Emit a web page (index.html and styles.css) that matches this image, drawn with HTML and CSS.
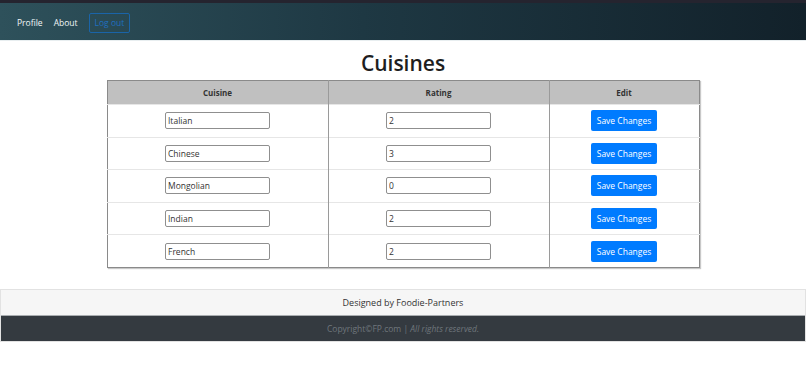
FILE: index.html
```html
<!DOCTYPE html>
<html lang="en">
    <head>
        <meta name="viewport" content="width=device-width, initial-scale=1">
        <link rel="stylesheet" href="styles.css">
        <title>Cuisines</title>
    </head>
    <body>
        <div class="topline"></div>
        <nav class="navbar">
            <a href="#">Profile</a>
            <a href="#">About</a>
            <button class="logout">Log out</button>
        </nav>
        <h1 class="title">Cuisines</h1>
        <table class="cuisines">
            <thead>
                <tr>
                    <th class="col-name">Cuisine</th>
                    <th class="col-rating">Rating</th>
                    <th>Edit</th>
                </tr>
            </thead>
            <tbody>
                <tr>
                    <td><input type="text" value="Italian"></td>
                    <td><input type="text" value="2"></td>
                    <td><button class="save">Save Changes</button></td>
                </tr>
                <tr>
                    <td><input type="text" value="Chinese"></td>
                    <td><input type="text" value="3"></td>
                    <td><button class="save">Save Changes</button></td>
                </tr>
                <tr>
                    <td><input type="text" value="Mongolian"></td>
                    <td><input type="text" value="0"></td>
                    <td><button class="save">Save Changes</button></td>
                </tr>
                <tr>
                    <td><input type="text" value="Indian"></td>
                    <td><input type="text" value="2"></td>
                    <td><button class="save">Save Changes</button></td>
                </tr>
                <tr>
                    <td><input type="text" value="French"></td>
                    <td><input type="text" value="2"></td>
                    <td><button class="save">Save Changes</button></td>
                </tr>
            </tbody>
        </table>
        <footer>
            <div class="designed">Designed by Foodie-Partners</div>
            <div class="copyright">Copyright&copy;FP.com | <em>All rights reserved.</em></div>
        </footer>
    </body>
</html>
```

FILE: styles.css
```css
body {
    margin: 0;
    color: #212529;
    font-family: "Open Sans", "Noto Sans", sans-serif;
    font-size: 9px;
    background: #fff;
}

.topline {
    height: 3px;
    background: #25242f;
}

.navbar {
    display: flex;
    align-items: center;
    height: 38px;
    padding: 2px 0 0 17px;
    box-sizing: border-box;
    background: linear-gradient(to right, #2e515b, #1e3843 45%, #12212a);
    border-bottom: 1px solid #e8eef0;
}

.navbar a {
    color: #f2f6f7;
    text-decoration: none;
    font-size: 8.5px;
    margin-right: 11px;
}

.logout {
    height: 20px;
    padding: 0 5px;
    margin-left: 0;
    background: transparent;
    border: 1px solid #1a64a8;
    border-radius: 2px;
    color: #1f6fc0;
    font-family: inherit;
    font-size: 8.5px;
}

.title {
    margin: 8px 0 3px;
    text-align: center;
    font-size: 21px;
    font-weight: 600;
    line-height: 28px;
    color: #1e1e1e;
}

.cuisines {
    width: 593px;
    margin: 0 auto;
    border-collapse: collapse;
    border: 1px solid #8a8a8a;
    box-shadow: 1px 1px 1px #c8c8c8;
}

.cuisines th {
    height: 23px;
    padding: 0;
    background: #c0c0c0;
    font-size: 8px;
    font-weight: 700;
    color: #333;
    border-left: 1px solid #9a9a9a;
}

.cuisines .col-name,
.cuisines .col-rating {
    width: 220px;
}

.cuisines td {
    height: 31.6px;
    padding: 0;
    text-align: center;
    border-left: 1px solid #9a9a9a;
    border-top: 1px solid #e6e6e6;
}

.cuisines th:first-child,
.cuisines td:first-child {
    border-left: 0;
}

.cuisines input[type=text] {
    box-sizing: border-box;
    width: 105px;
    height: 17px;
    padding: 0 2px;
    border: 1px solid #8f8f8f;
    border-radius: 2px;
    font-family: inherit;
    font-size: 8.5px;
    color: #333;
}

.save {
    height: 21px;
    padding: 0 6px;
    background: #007bff;
    border: 0;
    border-radius: 2px;
    color: #fff;
    font-family: inherit;
    font-size: 8.5px;
}

footer {
    margin-top: 21px;
    border: 1px solid #e2e2e2;
}

.designed {
    height: 25px;
    line-height: 25px;
    text-align: center;
    background: #f6f6f6;
    color: #333;
    border-bottom: 1px solid #a9adb0;
}

.copyright {
    height: 25px;
    line-height: 25px;
    text-align: center;
    background: #343a40;
    color: #6f767c;
    font-size: 8.5px;
}
```
